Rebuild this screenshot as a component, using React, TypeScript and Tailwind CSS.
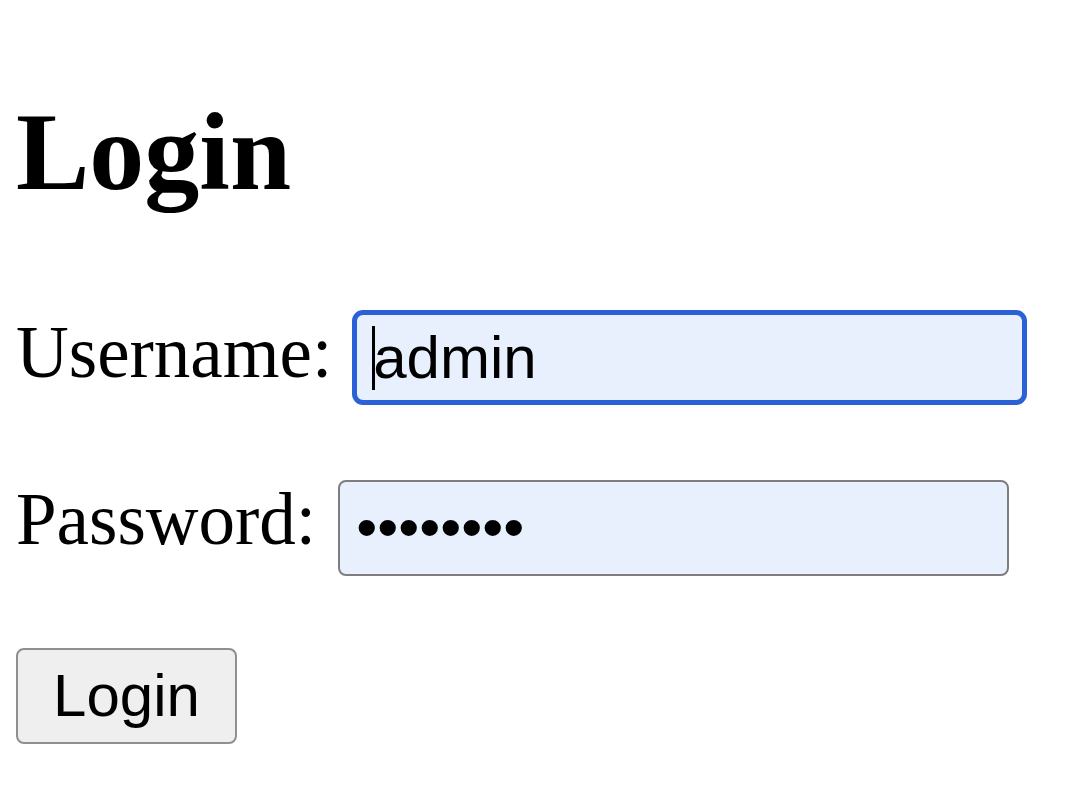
import React from "react";

export default function App() {
  const serif = { fontFamily: '"Liberation Serif", "Times New Roman", serif' };
  return (
    <div className="min-h-[809px] w-[1080px] bg-white pl-[16px] pt-[97px] text-black" style={serif}>
      <h1 className="h-[110px] text-[110px] font-bold leading-none">Login</h1>

      <div className="mt-[103px] flex h-[95px] items-center">
        <span className="mb-[11px] text-[73px] leading-none">Username:</span>
        <div className="ml-[20px] flex h-[95px] w-[675px] items-center rounded-[11px] border-[5px] border-[#2b61d6] bg-[#e8f0fe] pl-[15px] font-['Liberation_Sans',Arial,sans-serif] text-[60px]">
          <span className="-mr-[2px] inline-block h-[64px] w-[3px] bg-black" />
          <span className="leading-none">admin</span>
        </div>
      </div>

      <div className="mt-[75px] flex h-[96px] items-center">
        <span className="mb-[17px] text-[73px] leading-none">Password:</span>
        <div className="ml-[22px] flex h-[96px] w-[671px] items-center rounded-[8px] border-2 border-[#7e7e7e] bg-[#e8f0fe] pl-[16px] font-['Liberation_Sans',Arial,sans-serif] text-[60px]">
          <span className="leading-none">••••••••</span>
        </div>
      </div>

      <button className="mt-[72px] flex h-[96px] w-[221px] items-center justify-center rounded-[8px] border-2 border-[#8f8f8f] bg-[#efefef] font-['Liberation_Sans',Arial,sans-serif] text-[60px] leading-none text-black">
        Login
      </button>
    </div>
  );
}
